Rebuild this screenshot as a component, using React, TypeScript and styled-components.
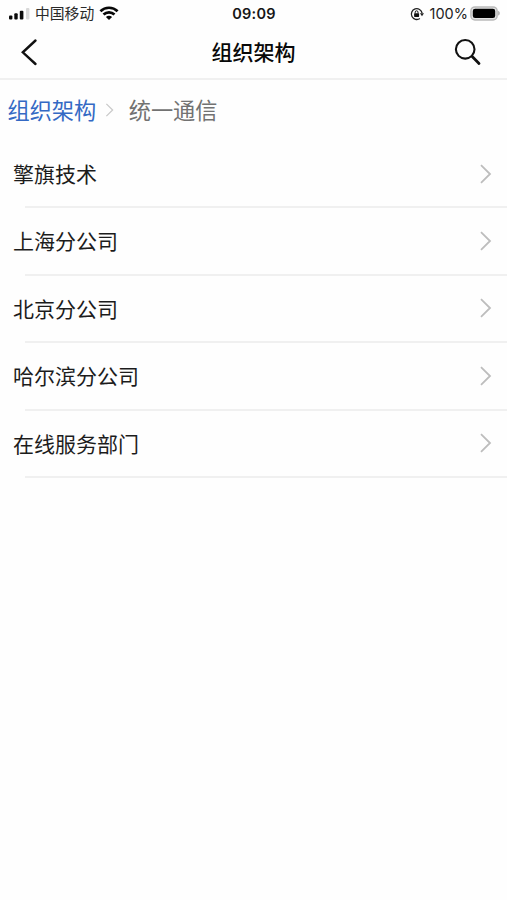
import React from 'react';
import styled, { createGlobalStyle } from 'styled-components';

const GlobalStyle = createGlobalStyle`
  * { box-sizing: border-box; }
  body {
    margin: 0;
    background: #fefefe;
    color: #161616;
    font-family: "Noto Sans CJK SC", sans-serif;
  }
  svg { display: block; flex: none; }
`;

const Screen = styled.div`
  min-height: 900px;
  width: 100%;
  background: #fefefe;
  display: flex;
  flex-direction: column;
`;

const StatusBar = styled.div`
  height: 27px;
  display: grid;
  grid-template-columns: 1fr auto 1fr;
  align-items: center;
  padding: 0 7px 0 8px;
`;

const StatusGroup = styled.div<{ $end?: boolean }>`
  display: flex;
  align-items: center;
  justify-content: ${(p) => (p.$end ? 'flex-end' : 'flex-start')};
`;

const Carrier = styled.span`
  font-size: 14.8px;
  line-height: 25px;
  padding-bottom: 2px;
  color: #2a2a2a;
  margin: 0 5px 0 5px;
`;

const Clock = styled.span`
  font: 600 14.5px/27px Inter, sans-serif;
  letter-spacing: 0.2px;
`;

const Percent = styled.span`
  font: 400 14.5px/27px Inter, sans-serif;
  color: #222;
  margin: 0 2px 0 6px;
`;

const NavBar = styled.header`
  height: 53px;
  display: grid;
  grid-template-columns: 1fr auto 1fr;
  align-items: center;
  padding: 0 25px 2px 20px;
  border-bottom: 2px solid #f0f0f0;
`;

const Title = styled.h1`
  margin: 0 0 0 5px;
  padding-bottom: 2px;
  font-size: 21px;
  line-height: 30px;
  font-weight: 500;
  color: #080808;
`;

const IconButton = styled.button<{ $end?: boolean }>`
  border: 0;
  padding: 0;
  background: none;
  display: flex;
  color: #111;
  justify-self: ${(p) => (p.$end ? 'end' : 'start')};
`;

const Breadcrumb = styled.nav`
  height: 61px;
  display: flex;
  align-items: center;
  padding: 0 0 1px 7.5px;
  font-size: 22.2px;
  line-height: 32px;
`;

const Crumb = styled.span<{ $current?: boolean }>`
  padding-bottom: 2px;
  color: ${(p) => (p.$current ? '#727272' : '#3469c4')};
`;

const CrumbArrow = styled.span`
  margin: 0 14.5px 0 9px;
`;

const List = styled.ul`
  list-style: none;
  margin: 0;
  padding: 0;
`;

const Row = styled.li`
  height: 67.4px;
  display: grid;
  grid-template-columns: 1fr auto;
  grid-template-rows: 1fr 2px;
  align-items: center;
`;

const RowLabel = styled.span`
  padding: 0 0 1.4px 13px;
  font-size: 21px;
  line-height: 30px;
  color: #1c1c1c;
`;

const RowArrow = styled.span`
  padding-right: 15px;
`;

const Divider = styled.span`
  grid-column: 1 / -1;
  height: 2px;
  margin-left: 25px;
  background: #f0f0f0;
`;

const departments = ['擎旗技术', '上海分公司', '北京分公司', '哈尔滨分公司', '在线服务部门'];

const SignalIcon = () => (
  <svg width="22" height="14" viewBox="0 0 22 14" fill="#0a0a0a">
    <rect x="1" y="8.5" width="3.4" height="4" rx="1" />
    <rect x="6.3" y="6.3" width="3.4" height="6.2" rx="1" />
    <rect x="11.8" y="3.8" width="3.6" height="8.7" rx="1" />
    <rect x="18" y="1" width="3.4" height="11.5" rx="1" fill="#d8d8d8" />
  </svg>
);

const WifiIcon = () => (
  <svg width="20" height="15" viewBox="0 0 20 15" fill="none" stroke="#080808" strokeWidth="2.7">
    <path d="M1.4 5.2C6.2.6 13.8.6 18.6 5.2" />
    <path d="M4.5 8.5c3.1-2.9 7.9-2.9 11 0" />
    <path d="M10 14.1 6.9 11c1.8-1.6 4.4-1.6 6.2 0z" fill="#080808" stroke="none" />
  </svg>
);

const RotationLockIcon = () => (
  <svg width="14" height="14" viewBox="0 0 14 14">
    <path d="M9.9 11.5A5.4 5.4 0 1 1 12.1 6.2" fill="none" stroke="#222" strokeWidth="1.3" />
    <path d="M9.9 6.2h4.1L12 9.2z" fill="#222" />
    <rect x="4.1" y="6.2" width="5" height="3.7" rx=".6" fill="#111" />
    <path d="M5.2 6.4V5.2a1.4 1.4 0 0 1 2.8 0v1.2" fill="none" stroke="#111" />
  </svg>
);

const BatteryIcon = () => (
  <svg width="30" height="15" viewBox="0 0 30 15">
    <rect x=".9" y=".9" width="26.2" height="13" rx="4" fill="#e4e4e4" stroke="#bababa" strokeWidth="1.5" />
    <rect x="2.8" y="2.7" width="22.4" height="9.4" rx="2.3" fill="#000" />
    <path d="M28.2 4.8c2 .8 2 4 0 4.8z" fill="#aaa" />
  </svg>
);

const BackIcon = () => (
  <svg width="19" height="28" viewBox="0 0 19 28" fill="none" stroke="currentColor" strokeWidth="2.4" strokeLinecap="round">
    <path d="M15.5 2.5 2.8 14.3 15.5 26" />
  </svg>
);

const SearchIcon = () => (
  <svg width="28" height="28" viewBox="0 0 28 28" fill="none" stroke="currentColor" strokeLinecap="round">
    <circle cx="11.2" cy="11.3" r="9.3" strokeWidth="2.1" />
    <path d="m18.2 18.5 6.8 6.9" strokeWidth="2.8" />
  </svg>
);

const ChevronIcon = ({ small = false }: { small?: boolean }) => (
  <svg width={small ? 9 : 13} height={small ? 14 : 20} viewBox="0 0 13 20" fill="none" stroke={small ? '#c9c9c9' : '#bdbdbd'} strokeWidth="1.8">
    <path d="m2 1.2 9 8.8-9 8.8" />
  </svg>
);

export default function App() {
  return (
    <Screen>
      <GlobalStyle />
      <StatusBar>
        <StatusGroup>
          <SignalIcon />
          <Carrier>中国移动</Carrier>
          <WifiIcon />
        </StatusGroup>
        <Clock>09:09</Clock>
        <StatusGroup $end>
          <RotationLockIcon />
          <Percent>100%</Percent>
          <BatteryIcon />
        </StatusGroup>
      </StatusBar>
      <NavBar>
        <IconButton aria-label="返回"><BackIcon /></IconButton>
        <Title>组织架构</Title>
        <IconButton $end aria-label="搜索"><SearchIcon /></IconButton>
      </NavBar>
      <Breadcrumb>
        <Crumb>组织架构</Crumb>
        <CrumbArrow><ChevronIcon small /></CrumbArrow>
        <Crumb $current>统一通信</Crumb>
      </Breadcrumb>
      <List>
        {departments.map((name) => (
          <Row key={name}>
            <RowLabel>{name}</RowLabel>
            <RowArrow><ChevronIcon /></RowArrow>
            <Divider />
          </Row>
        ))}
      </List>
    </Screen>
  );
}
